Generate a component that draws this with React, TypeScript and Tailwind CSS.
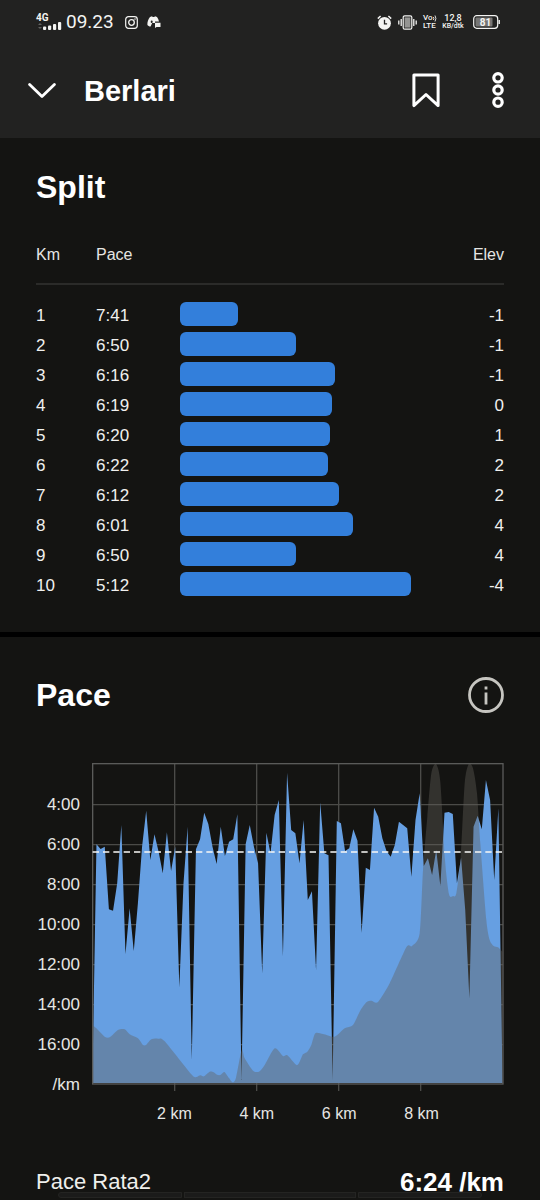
interface Split {
  km: number
  pace: string
  // bar length as a share of the fastest split
  share: number
  elev: string
}

const splits: Split[] = [
  { km: 1, pace: '7:41', share: 25, elev: '-1' },
  { km: 2, pace: '6:50', share: 50, elev: '-1' },
  { km: 3, pace: '6:16', share: 67, elev: '-1' },
  { km: 4, pace: '6:19', share: 66, elev: '0' },
  { km: 5, pace: '6:20', share: 65, elev: '1' },
  { km: 6, pace: '6:22', share: 64, elev: '2' },
  { km: 7, pace: '6:12', share: 69, elev: '2' },
  { km: 8, pace: '6:01', share: 75, elev: '4' },
  { km: 9, pace: '6:50', share: 50, elev: '4' },
  { km: 10, pace: '5:12', share: 100, elev: '-4' },
]

const paceTicks = ['4:00', '6:00', '8:00', '10:00', '12:00', '14:00', '16:00', '/km']
const kmTicks = ['2 km', '4 km', '6 km', '8 km']

// Chart space is 1236 x 984 units, the plot ends at y = 963
const BASE = 960
const LEFT = 1
const STEP = 12.43

// One sample every ~100 m, measured from the top of the plot
const paceSamples = [
  960, 244, 258, 251, 439, 443, 361, 186, 573, 436, 564, 421, 251, 143, 291, 214, 266, 331, 208, 324,
  251, 673, 361, 191, 891, 259, 229, 149, 183, 251, 303, 191, 279, 236, 229, 154, 951, 244, 186, 251,
  301, 631, 209, 271, 156, 111, 579, 29, 201, 211, 301, 171, 411, 385, 621, 118, 271, 277, 951, 174,
  181, 264, 256, 199, 233, 509, 314, 321, 134, 161, 226, 264, 281, 246, 176, 186, 196, 341, 171, 91,
  309, 286, 336, 261, 369, 149, 147, 153, 361, 284, 441, 706, 191, 158, 199, 51, 111, 351, 136, 960,
]

const elevation: [number, number][] = [
  [1, 787], [13, 796], [38, 821], [53, 823], [78, 801], [98, 799], [113, 814], [138, 826], [153, 846],
  [163, 845], [178, 829], [198, 827], [218, 835], [298, 934], [313, 942], [325, 937], [336, 940],
  [353, 926], [365, 928], [375, 935], [385, 936], [397, 927], [411, 945], [422, 958], [432, 944],
  [449, 861], [458, 886], [483, 923], [501, 926], [518, 906], [548, 856], [573, 879], [586, 877],
  [613, 906], [623, 896], [633, 874], [646, 866], [658, 846], [670, 811], [693, 813], [728, 821],
  [758, 796], [783, 786], [803, 746], [823, 718], [838, 713], [858, 717], [893, 661], [943, 553],
  [960, 549], [983, 511], [993, 321], [1006, 161], [1018, 31], [1032, 3], [1045, 56], [1059, 291],
  [1071, 394], [1083, 399], [1093, 391], [1106, 281], [1118, 61], [1130, 3], [1143, 16], [1155, 91],
  [1165, 241], [1183, 471], [1193, 531], [1205, 549], [1218, 553], [1231, 566],
]

function pacePath() {
  const points = paceSamples.map((y, i) => `${(LEFT + i * STEP).toFixed(1)} ${y}`)
  return `M${points.join('L')}Z`
}

// Catmull-Rom through the points, closed along the base line
function elevationPath() {
  let d = `M${elevation[0][0]} ${BASE}L${elevation[0].join(' ')}`
  for (let i = 0; i < elevation.length - 1; i++) {
    const p0 = elevation[Math.max(i - 1, 0)]
    const p1 = elevation[i]
    const p2 = elevation[i + 1]
    const p3 = elevation[Math.min(i + 2, elevation.length - 1)]
    const c1 = `${p1[0] + (p2[0] - p0[0]) / 8} ${p1[1] + (p2[1] - p0[1]) / 8}`
    const c2 = `${p2[0] - (p3[0] - p1[0]) / 8} ${p2[1] - (p3[1] - p1[1]) / 8}`
    d += `C${c1} ${c2} ${p2.join(' ')}`
  }
  return `${d}L${elevation[elevation.length - 1][0]} ${BASE}Z`
}

function StatusBar() {
  return (
    <div className="flex h-11 items-center justify-between pr-10 pl-9 font-['Roboto',sans-serif] text-[#f4f4f2]">
      <div className="flex items-center">
        <div className="flex w-[26px] flex-col">
          <span className="text-[10px] leading-[8px] font-bold">4G</span>
          <svg className="ml-[2px] h-2 w-6" viewBox="0 0 24 8" fill="currentColor" aria-hidden="true">
            <path d="M0 3l2-2 2 2zM0 5l2 2 2-2z" opacity=".3" />
            <rect x="5" y="4.5" width="3.2" height="3.5" rx="1" />
            <rect x="10" y="3.5" width="3.2" height="4.5" rx="1" />
            <rect x="15" y="2" width="3.2" height="6" rx="1" />
            <rect x="20" y="0" width="3.2" height="8" rx="1" />
          </svg>
        </div>
        <span className="ml-1 w-[48px] text-[19px] leading-6">09.23</span>
        <svg className="ml-[11px] size-[13px]" viewBox="0 0 13 13" fill="none" stroke="currentColor" aria-hidden="true">
          <rect x=".7" y=".7" width="11.6" height="11.6" rx="2.8" strokeWidth="1.2" />
          <circle cx="6.5" cy="6.5" r="2.8" strokeWidth="1.3" />
          <circle cx="10" cy="3" r=".5" fill="currentColor" strokeWidth=".4" />
        </svg>
        <svg className="ml-[9px] h-3 w-[14px]" viewBox="0 0 14 12" fill="currentColor" aria-hidden="true">
          <path
            fillRule="evenodd"
            d="M3 1 5 .3l.7.8h1.6L8 .3l2 .7c1.1 1.5 1.7 3 2 4.400H8v1.600H5.200L3.600 10.600C2.2 10.4 1 9.800.4 9 .2 6 1.200 3 3 1zM4.700 4.600a1 1.200 0 1 0 0 2.400 1 1.200 0 0 0 0-2.400z"
          />
          <path d="M8 6.800h5.500V11H9.500l-1.500 1z" />
        </svg>
      </div>

      <div className="flex items-center">
        <svg className="size-[15px]" viewBox="0 0 15 15" fill="none" stroke="currentColor" aria-hidden="true">
          <circle cx="7.5" cy="8.3" r="6.4" fill="currentColor" stroke="none" />
          <path d="M.8 3.6 3.6 1M14.2 3.6 11.4 1" strokeWidth="1.5" />
          <path d="M7.5 4.8v4h2.6" stroke="#222221" strokeWidth="1.3" />
        </svg>
        <svg className="ml-[6px] h-[15px] w-[19px]" viewBox="0 0 19 15" fill="none" stroke="currentColor" aria-hidden="true">
          <rect x="5.2" y=".8" width="8.6" height="13.4" rx="1.5" strokeWidth="1.2" />
          <rect x="6.6" y="2.4" width="5.8" height="10.2" fill="currentColor" stroke="none" opacity=".55" />
          <path d="M3.2 4v7M.8 5.5v4M15.8 4v7M18.2 5.5v4" strokeWidth="1.3" />
        </svg>
        <div className="ml-[6px] w-[14px] text-[8px] leading-[8px] font-medium">
          <div className="flex items-center">
            <span>Vo</span>
            <svg className="h-[7px] w-1 shrink-0" viewBox="0 0 4 7" fill="none" stroke="currentColor" aria-hidden="true">
              <path d="M.4 2q1 1.500 0 3M2 .500q1.800 3 0 6" strokeWidth=".9" />
            </svg>
          </div>
          <div>LTE</div>
        </div>
        <div className="ml-1 w-6 text-center text-[9px] leading-[8px] font-medium">
          <div>12,8</div>
          <div className="text-[7px]">KB/dtk</div>
        </div>
        <svg className="ml-2 h-[14px] w-[27px]" viewBox="0 0 27 14" fill="none" stroke="currentColor" aria-label="Baterai 81">
          <rect x=".7" y=".7" width="24" height="12.6" rx="3" strokeWidth="1.2" />
          <path d="M26.2 5v4" strokeWidth="1.4" />
          <rect x="2.5" y="2.5" width="17" height="9" rx="1" fill="currentColor" stroke="none" opacity=".4" />
          <text x="12.5" y="10.5" textAnchor="middle" fontSize="10" fontWeight="700" fill="currentColor" stroke="none">
            81
          </text>
        </svg>
      </div>
    </div>
  )
}

function TopBar() {
  return (
    <div className="flex h-[94px] items-center pr-[30px] pb-[2px] pl-7">
      <button type="button" aria-label="Tutup">
        <svg className="h-9 w-7" viewBox="0 0 28 36" fill="none" stroke="currentColor" strokeWidth="2.8" strokeLinecap="round" strokeLinejoin="round">
          <path d="M1.6 12.500 14 24.500 26.400 12.500" />
        </svg>
      </button>
      <h1 className="ml-7 flex-1 pt-[2px] text-[29px] leading-8 font-bold">Berlari</h1>
      <button type="button" aria-label="Simpan">
        <svg className="h-9 w-7" viewBox="0 0 28 36" fill="none" stroke="currentColor" strokeWidth="3" strokeLinecap="round" strokeLinejoin="round">
          <path d="M1.9 2.9h24.2v30.700L14 22.500 1.900 33.600z" />
        </svg>
      </button>
      <button type="button" aria-label="Menu lainnya" className="ml-[46px]">
        <svg className="h-10 w-6" viewBox="0 0 24 40" fill="none" stroke="currentColor" strokeWidth="3.2">
          <circle cx="12" cy="7.8" r="4.2" />
          <circle cx="12" cy="20" r="4.2" />
          <circle cx="12" cy="32.2" r="4.2" />
        </svg>
      </button>
    </div>
  )
}

function SplitTable() {
  return (
    <section className="px-9 pt-[31px] pb-8">
      <h2 className="text-[32px] leading-9 font-bold">Split</h2>
      <table className="mt-[33px] w-full table-fixed text-left">
        <thead>
          <tr className="h-[46px] align-top text-base leading-6 text-[#e6e6e3]">
            <th className="w-[60px] pt-[5px] font-normal">Km</th>
            <th className="w-[84px] pt-[5px] font-normal">Pace</th>
            <th aria-label="Grafik" />
            <th className="w-[93px] pt-[5px] text-right font-normal">Elev</th>
          </tr>
          <tr>
            <td colSpan={4} className="h-4 border-t-2 border-[#2b2b29]" />
          </tr>
        </thead>
        <tbody>
          {splits.map((split) => (
            <tr key={split.km} className="h-[30px] text-[17px] leading-6 text-[#f0f0ee]">
              <td className="pt-[2px]">{split.km}</td>
              <td className="pt-[2px]">{split.pace}</td>
              <td className="pb-[2px]">
                <div className="h-6 rounded-md bg-[#337fdb]" style={{ width: `${split.share}%` }} />
              </td>
              <td className="pt-[2px] text-right">{split.elev}</td>
            </tr>
          ))}
        </tbody>
      </table>
    </section>
  )
}

function PaceChart() {
  return (
    <div className="mt-[50px] flex gap-3">
      <div className="flex w-11 shrink-0 flex-col pt-[22px] text-right text-[17px] text-[#e6e6e3]">
        {paceTicks.map((tick) => (
          <span key={tick} className="h-10 leading-10">
            {tick}
          </span>
        ))}
      </div>
      <div className="min-w-0 flex-1">
        <svg className="block h-[328px] w-full" viewBox="0 0 1236 984" preserveAspectRatio="none" role="img" aria-label="Grafik pace">
          <g stroke="#4b4b48" strokeWidth="4" fill="none">
            <path d="M0 125H1233M0 245H1233M0 365H1233M0 485H1233M0 605H1233M0 725H1233M0 845H1233" />
            <path d="M248 3V984M494 3V984M740 3V984M986 3V984" />
          </g>
          <path d={pacePath()} fill="#669fe2" />
          <path d={elevationPath()} fill="#61605a" fillOpacity=".4" />
          <rect x="2" y="2" width="1231" height="961" fill="none" stroke="#5a5b59" strokeWidth="4" />
          <path d="M2 267H1233" stroke="#f8f8f6" strokeWidth="5" strokeDasharray="19 12" />
        </svg>
        <div className="mt-[11px] grid grid-cols-4 px-[10%] text-center text-base leading-6 text-[#e6e6e3]">
          {kmTicks.map((tick) => (
            <span key={tick}>{tick}</span>
          ))}
        </div>
      </div>
    </div>
  )
}

export default function App() {
  return (
    <div className="min-h-screen bg-[#141412] font-['Liberation_Sans',Arial,sans-serif] text-white">
      <header className="bg-[#222221]">
        <StatusBar />
        <TopBar />
      </header>
      <main>
        <SplitTable />
        <div className="h-[5px] bg-black" />
        <section className="px-9 pt-10">
          <div className="flex items-center justify-between">
            <h2 className="text-[32px] leading-9 font-bold">Pace</h2>
            <button type="button" aria-label="Info pace" className="text-[#c6c5c0]">
              <svg className="size-9" viewBox="0 0 36 36" fill="none" stroke="currentColor">
                <circle cx="18" cy="18" r="16.5" strokeWidth="2.8" />
                <path d="M18 15.500v12M18 9.500v3" strokeWidth="2.8" />
              </svg>
            </button>
          </div>
          <PaceChart />
          <div className="mt-[46px] flex items-center justify-between leading-5">
            <span className="text-[22px] text-[#efefec]">Pace Rata2</span>
            <span className="text-[26px] font-bold">6:24 /km</span>
          </div>
        </section>
      </main>
      <footer className="flex gap-[2px] px-[58px]">
        <div className="h-[6px] flex-[124] rounded-l border border-[#242422] bg-[#1b1b1a]" />
        <div className="h-[6px] flex-[172] border border-[#242422] bg-[#1b1b1a]" />
        <div className="h-[6px] flex-[124] rounded-r border border-[#242422] bg-[#1b1b1a]" />
      </footer>
    </div>
  )
}
